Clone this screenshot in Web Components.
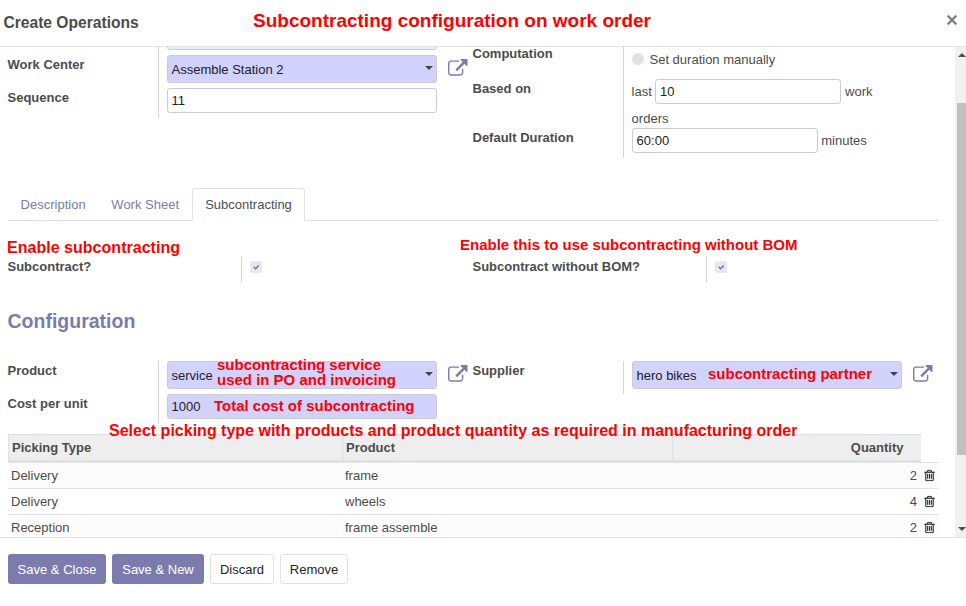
<!DOCTYPE html>
<html lang="en">
<head>
<meta charset="utf-8">
<title>Create Operations</title>
<style>
body{margin:0;width:966px;height:606px;overflow:hidden;background:#fff;color:#4c4c4c;font:13px/19.5px "Liberation Sans",Arial,sans-serif}
</style>
</head>
<body>
<op-dialog></op-dialog>
<script>
const define = (name, css, html, after) => customElements.define(name, class extends HTMLElement {
  connectedCallback() {
    if (this.shadowRoot) return;
    const root = this.attachShadow({mode: 'open'});
    const markup = typeof html === 'function' ? html(this) : html;
    root.innerHTML = `<style>*{box-sizing:border-box}${css}</style>${markup}`;
    if (after) after(this, root);
  }
});

const paths = {
  link: 'M1408 928v320q0 119-84.5 203.5t-203.5 84.5h-832q-119 0-203.5-84.5t-84.5-203.5v-832q0-119 84.5-203.5t203.5-84.5h704q14 0 23 9t9 23v64q0 14-9 23t-23 9h-704q-66 0-113 47t-47 113v832q0 66 47 113t113 47h832q66 0 113-47t47-113v-320q0-14 9-23t23-9h64q14 0 23 9t9 23zm384-864v512q0 26-19 45t-45 19-45-19l-176-176-652 652q-10 10-23 10t-23-10l-114-114q-10-10-10-23t10-23l652-652-176-176q-19-19-19-45t19-45 45-19h512q26 0 45 19t19 45z',
  trash: 'M704 736v576q0 14-9 23t-23 9h-64q-14 0-23-9t-9-23v-576q0-14 9-23t23-9h64q14 0 23 9t9 23zm256 0v576q0 14-9 23t-23 9h-64q-14 0-23-9t-9-23v-576q0-14 9-23t23-9h64q14 0 23 9t9 23zm256 0v576q0 14-9 23t-23 9h-64q-14 0-23-9t-9-23v-576q0-14 9-23t23-9h64q14 0 23 9t9 23zm128 724v-948h-896v948q0 22 7 40.5t14.5 27 10.5 8.5h832q3 0 10.5-8.5t14.5-27 7-40.5zm-672-1076h448l-48-117q-7-9-17-11h-317q-10 2-17 11zm928 32v64q0 14-9 23t-23 9h-96v948q0 83-47 143.5t-113 60.5h-832q-66 0-113-58.5t-47-141.5v-952h-96q-14 0-23-9t-9-23v-64q0-14 9-23t23-9h309l70-167q15-37 54-63t79-26h320q40 0 79 26t54 63l70 167h309q14 0 23 9t9 23z',
  check: 'M1671 566q0 40-28 68l-724 724-136 136q-28 28-68 28t-68-28l-136-136-362-362q-28-28-28-68t28-68l136-136q28-28 68-28t68 28l294 295 656-657q28-28 68-28t68 28l136 136q28 28 28 68z'
};

define('op-icon', ':host{display:block;flex:none}svg{display:block;fill:currentColor;overflow:visible;stroke:currentColor;stroke-width:var(--weight,0)}',
  h => `<svg width="${h.getAttribute('size')}" height="${h.getAttribute('size')}" viewBox="0 0 1792 1792"><path d="${paths[h.getAttribute('name')]}"/></svg>`);

define('op-row', `:host{display:flex;min-height:25px}
  .label{width:var(--label,150.5px);flex:none;font-weight:bold;color:#4c4c4c;white-space:nowrap}
  .value{flex:1;border-left:1px solid #d4d4d4;padding:0 0 5px 8px;display:flex;align-items:flex-start}`,
  h => `<div class="label">${h.getAttribute('label') || ''}</div><div class="value"><slot></slot></div>`);

define('op-field', `:host{display:flex;align-items:center;flex:none;height:25px;width:270px;border:1px solid #ccc;border-radius:3px;background:#fff;color:#212121;padding-left:3.5px;box-sizing:border-box}
  :host([required]){background:#d2d2ff}
  :host([select]){height:28px;padding-top:1px}
  i{margin:-3px 3px 0 auto;border:4px solid transparent;border-top-color:#444;border-bottom:0}`,
  h => `<slot></slot>${h.hasAttribute('select') ? '<i></i>' : ''}`);

define('op-check', ':host{display:flex;align-items:center;justify-content:center;width:12px;height:12px;margin-top:4px;border-radius:2px;background:#e6e8ed;color:#7c7bad}',
  '<op-icon name="check" size="6.5" style="--weight:90"></op-icon>');

define('op-tab', `:host{display:block;height:33px;padding:6px 12px 0;border:1px solid transparent;box-sizing:border-box;color:#7c7bad;white-space:nowrap}
  :host([active]){background:#fff;color:#495057;border-color:#dee2e6;border-bottom-color:#fff;border-radius:3px 3px 0 0}`, '<slot></slot>');

define('op-button', `:host{display:block;height:30px;line-height:30px;border:1px solid #dee2e6;border-radius:2.5px;color:#212529;background:#fff;box-sizing:border-box;white-space:nowrap;text-align:center}
  :host([primary]){background:#7c7bad;border-color:#7c7bad;color:#fff}`, '<slot></slot>');

define('op-lines', `:host{display:block}
  .head{display:grid;grid-template-columns:334px 330px 1fr;width:913px;height:28px;background:#eee;border-top:1px solid #dee2e6;border-bottom:2px solid #dee2e6;font-weight:bold;line-height:26px}
  .head div{border-left:1px solid #dee2e6;padding-left:3px}
  .head .q{text-align:right;padding-right:17.5px}
  .line{display:grid;grid-template-columns:334px 1fr 20px 22px;height:26px;line-height:25px;border-top:1px solid #dee2e6;background:#fff}
  .line:nth-of-type(even){background:#fcfcfc}
  .line div{padding-left:3px}.line .q{padding:0;text-align:right}
  op-icon{color:#222;margin:6px 0 0 5.5px;--weight:20}`,
  () => `<div class="head"><div>Picking Type</div><div>Product</div><div class="q">Quantity</div></div>` +
    [['Delivery', 'frame', 2], ['Delivery', 'wheels', 4], ['Reception', 'frame assemble', 2]]
      .map(r => `<div class="line"><div>${r[0]}</div><div>${r[1]}</div><div class="q">${r[2]}</div><op-icon name="trash" size="13"></op-icon></div>`).join(''));

define('op-scrollbar', `:host{display:flex;flex-direction:column;align-items:flex-start;width:11px;flex:none;background:#f1f1f1;overflow:hidden}
  .up,.down{border:4px solid transparent;margin-left:3px}
  .up{border-top:0;border-bottom-color:#505050;margin-top:6px}
  .down{border-bottom:0;border-top-color:#505050;margin-top:72px}
  .thumb{width:13px;height:352px;margin:46px 0 0 2px;background:#c1c1c1;flex:none}`,
  '<div class="up"></div><div class="thumb"></div><div class="down"></div>');

// A note floats over the form; its text is fitted to the width it is given.
define('op-note', ':host{position:absolute;white-space:pre;font-weight:bold;color:#f00;line-height:14px}span{display:inline-block;transform-origin:0 0}', '<span><slot></slot></span>',
  (h, root) => {
    const [x, y, w, size] = h.getAttribute('box').split(' ').map(Number);
    h.style.cssText = `left:${x}px;top:${y - 7}px;font-size:${size}px`;
    const s = root.querySelector('span');
    s.style.transform = `scaleX(${w / s.getBoundingClientRect().width})`;
  });

define('op-dialog', `:host{display:flex;flex-direction:column;width:966px;height:606px;position:relative;overflow:hidden}
  header{height:47px;flex:none;display:flex;justify-content:space-between;align-items:center;padding:0 8px 0 3.5px;border-bottom:1px solid #e5e5e5}
  h4{margin:0;font-size:15.6px}
  header svg{margin:-6px .5px 0 0}
  main{height:490px;flex:none;display:flex}
  .sheet{flex:1;overflow:hidden;padding:0 16px 0 7.5px;min-width:0}
  .cols{display:grid;grid-template-columns:465px 1fr;align-items:start}
  .first{height:141px}
  .clip{height:8px;min-height:0;overflow:hidden}
  .clip op-field{margin-top:-22px;background:#e8f0fe}
  .up{margin-top:-3px}
  op-icon{color:#7c7bad;margin:3.5px 0 0 11px}
  .tabs{display:flex;height:33px;border-bottom:1px solid #dee2e6;margin-left:.5px}
  .tabs op-tab:nth-child(-n+2){margin:0 .1px 0 -.4px}
  .checks{--label:233.5px;margin-top:36px;height:25px}
  h2{margin:24px 0 25px;font-size:19.5px;line-height:30px;color:#7c7bad}
  .table{display:block;margin:10px 0 0 .5px}
  .radio{width:12px;height:12px;border-radius:50%;background:#dee2e6;margin:6px 5.5px 0 0;margin-top:9px}
  .txt{display:flex;flex-wrap:wrap;line-height:25px;column-gap:3.6px;margin-left:-.4px}
  .orders{width:100%;line-height:19px;margin-top:5px}
  .manual{margin-top:5.5px}
  footer{flex:1;display:flex;gap:6px;padding:16px 8px;border-top:1px solid #e5e5e5}`,
  `<header><h4>Create Operations</h4><svg width="12" height="12" viewBox="0 0 12 12"><path d="M1.7 1.7 10.3 10.3M10.3 1.7 1.7 10.3" stroke="#828282" stroke-width="2.4"/></svg></header>
  <main><div class="sheet">
    <div class="cols first">
      <div>
        <op-row class="clip"><op-field></op-field></op-row>
        <op-row label="Work Center"><op-field select required>Assemble Station 2</op-field><op-icon name="link" size="19.5"></op-icon></op-row>
        <op-row label="Sequence"><op-field>11</op-field></op-row>
      </div>
      <div class="up">
        <op-row label="Computation" style="height:35px"><span class="radio"></span><span class="manual">Set duration manually</span></op-row>
        <op-row label="Based on" style="height:49px"><div class="txt"><span>last</span><op-field style="width:186px">10</op-field><span>work</span><span class="orders">orders</span></div></op-row>
        <op-row label="Default Duration"><div class="txt"><op-field style="width:186px;padding-left:4px">60:00</op-field><span>minutes</span></div></op-row>
      </div>
    </div>
    <div class="tabs"><op-tab>Description</op-tab><op-tab>Work Sheet</op-tab><op-tab active>Subcontracting</op-tab></div>
    <div class="cols checks"><op-row label="Subcontract?"><op-check></op-check></op-row><op-row label="Subcontract without BOM?"><op-check></op-check></op-row></div>
    <h2>Configuration</h2>
    <div class="cols">
      <div>
        <op-row label="Product"><op-field select required>service</op-field><op-icon name="link" size="19.5"></op-icon></op-row>
        <op-row label="Cost per unit"><op-field required>1000</op-field></op-row>
      </div>
      <op-row label="Supplier"><op-field select required>hero bikes</op-field><op-icon name="link" size="19.5"></op-icon></op-row>
    </div>
    <op-lines class="table"></op-lines>
  </div><op-scrollbar></op-scrollbar></main>
  <footer><op-button primary style="width:98px">Save &amp; Close</op-button><op-button primary style="width:92px">Save &amp; New</op-button><op-button style="width:64px">Discard</op-button><op-button style="width:68px">Remove</op-button></footer>
  <op-note box="253 21 398 19">Subcontracting configuration on work order</op-note>
  <op-note box="6.5 248 173 16">Enable subcontracting</op-note>
  <op-note box="460 245 337.5 15">Enable this to use subcontracting without BOM</op-note>
  <op-note box="217 365 164 15">subcontracting service</op-note>
  <op-note box="217 380 179 15">used in PO and invoicing</op-note>
  <op-note box="708 374 164 15">subcontracting partner</op-note>
  <op-note box="214 406 200.5 15">Total cost of subcontracting</op-note>
  <op-note box="109 431 688.5 16">Select picking type with products and product quantity as required in manufacturing order</op-note>`);
</script>
</body>
</html>
